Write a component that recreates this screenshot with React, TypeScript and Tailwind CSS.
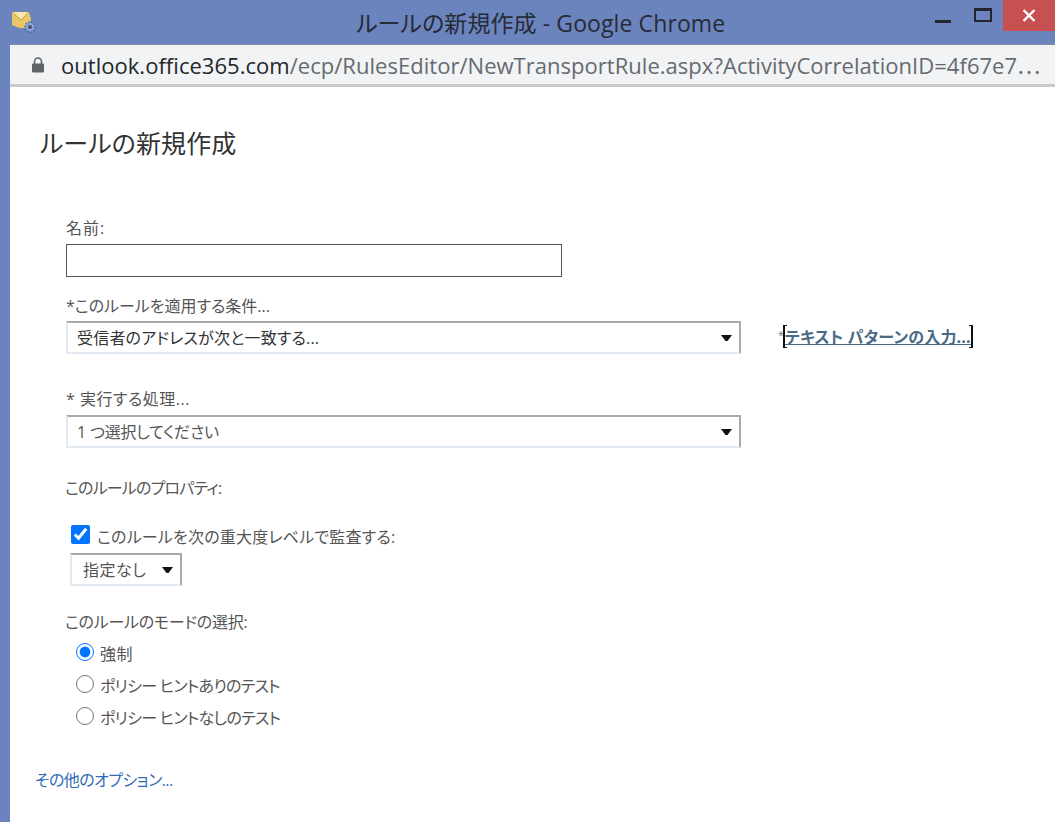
const jp = "font-['Segoe_UI','Open_Sans','Noto_Sans_CJK_JP',sans-serif] [font-feature-settings:'palt']";

function Caret({ className = "" }: { className?: string }) {
  return (
    <svg width="11" height="6" viewBox="0 0 11 6" className={className}>
      <path d="M0 0H11L6.5 6H4.5Z" fill="#111" />
    </svg>
  );
}

function Select({ text, dark, track }: { text: string; dark?: boolean; track: string }) {
  return (
    <div className="flex h-[33px] w-[675px] items-center justify-between border-2 border-t-[#a9a9ad] border-r-[#a9a9ad] border-b-[#e3e9f1] border-l-[#e3e9f1] pl-[9px] pr-[4px] bg-white">
      <span className={`text-[16px] leading-[22px] ${track} ${dark ? "text-[#333]" : "text-[#555]"}`}>{text}</span>
      <Caret className="mr-[3px]" />
    </div>
  );
}

function Radio({ label, checked, track = "" }: { label: string; checked?: boolean; track?: string }) {
  return (
    <label className="flex h-[32px] items-center">
      <input
        type="radio"
        name="mode"
        defaultChecked={checked}
        className="ml-[10px] mt-[-5px] h-[18px] w-[18px] accent-[#0075ff]"
      />
      <span className={`ml-[6px] text-[16px] leading-[22px] text-[#555] ${track}`}>{label}</span>
    </label>
  );
}

export default function App() {
  return (
    <div className={`${jp} flex h-[822px] w-[1055px] flex-col overflow-hidden bg-[#6b84bd]`}>
      <div className="flex h-[44px] shrink-0 items-start">
        <svg width="26" height="24" viewBox="0 0 26 24" className="ml-[11px] mt-[10px] shrink-0">
          <path d="M1 2H18L20 9L18 18H8L1 15Z" fill="#e9c667" />
          <path d="M1 2L10 10L18 2" fill="#f7e7a6" stroke="#c39a38" strokeWidth="1" />
          <circle cx="19" cy="17" r="5" fill="#8ea4d6" stroke="#3d5fa8" strokeWidth="1.5" strokeDasharray="1.5 1.5" />
          <circle cx="19" cy="17" r="2" fill="#47526e" />
        </svg>
        <div className="ml-[319px] mt-[8px] w-[369px] shrink-0 whitespace-nowrap text-[23px] leading-[30px] tracking-[0.1px] text-[#262b36]">
          ルールの新規作成 - Google Chrome
        </div>
        <div className="ml-[210px] mt-[20px] h-[3px] w-[16px] shrink-0 bg-[#23262e]" />
        <div className="ml-[23px] mt-[8px] h-[14px] w-[18px] shrink-0 border-2 border-t-[3px] border-[#23262e]" />
        <div className="ml-[11px] flex h-[31px] w-[52px] shrink-0 items-center justify-center bg-[#c75050]">
          <svg width="14" height="13" viewBox="0 0 14 13">
            <path d="M1.5 1L12.5 12M12.5 1L1.5 12" stroke="#fff" strokeWidth="2.4" />
          </svg>
        </div>
      </div>
      <div className="ml-[10px] flex min-h-0 flex-1 flex-col bg-white">
        <div className="flex h-[43px] shrink-0 items-center border-b-[3px] border-t border-b-[#c9c9c9] border-t-[#7e8ca8] bg-[#f1f3f4]">
          <svg width="14" height="16" viewBox="0 0 14 16" className="ml-[21px] shrink-0">
            <path d="M3.5 7V4.5a3.5 3.5 0 0 1 7 0V7" fill="none" stroke="#5f6368" strokeWidth="1.6" />
            <rect x="1" y="6.5" width="12" height="9" rx="1.2" fill="#5f6368" />
          </svg>
          <div className="ml-[16px] whitespace-nowrap text-[22px] leading-[30px] tracking-[0.03px] text-[#666a70]">
            <span className="text-[#23272c]">outlook.office365.com</span>/ecp/RulesEditor/NewTransportRule.aspx?ActivityCorrelationID=4f67e7⋯
          </div>
        </div>
        <div className="flex min-h-0 flex-1 flex-col">
          <h1 className="ml-[30px] mt-[40px] text-[25px] font-normal leading-[32px] tracking-[0.1px] text-[#333]">ルールの新規作成</h1>
          <div className="ml-[56px] mt-[58px] flex flex-col items-start">
            <div className="text-[16px] leading-[22px] tracking-[1px] text-[#555]">名前:</div>
            <div className="mt-[5px] h-[33px] w-[496px] border border-[#555] bg-white" />
            <div className="mt-[18px] text-[16px] leading-[22px] text-[#555]">*このルールを適用する条件...</div>
            <div className="mt-[4px] flex items-start">
              <Select text="受信者のアドレスが次と一致する..." dark track="tracking-[0.2px]" />
              <div className="ml-[37px] mt-[4px] flex items-center">
                <span className="mt-[-3px] text-[11px] leading-[14px] text-[#777]">*</span>
                <a className="relative -ml-[1px] flex h-[23px] items-center border-x-2 border-[#111] text-[16px] font-bold leading-[20px] tracking-[0.2px] text-[#4a6b85] underline">
                  <span className="absolute -left-[2px] top-0 h-[1px] w-[4px] bg-[#111]" />
                  <span className="absolute -left-[2px] bottom-0 h-[1px] w-[4px] bg-[#111]" />
                  テキスト パターンの入力...
                  <span className="absolute -right-[2px] top-0 h-[1px] w-[4px] bg-[#111]" />
                  <span className="absolute -right-[2px] bottom-0 h-[1px] w-[4px] bg-[#111]" />
                </a>
              </div>
            </div>
            <div className="mt-[34px] text-[16px] leading-[22px] tracking-[0.5px] text-[#555]">* 実行する処理...</div>
            <div className="mt-[5px]"><Select text="1 つ選択してください" track="tracking-[-0.2px]" /></div>
            <div className="-ml-[1px] mt-[29px] text-[16px] leading-[22px] tracking-[-0.8px] text-[#555]">このルールのプロパティ:</div>
            <label className="mt-[27px] flex h-[22px] items-center">
              <input type="checkbox" defaultChecked className="ml-[5px] mt-[-6px] h-[19px] w-[19px] accent-[#0075ff]" />
              <span className="ml-[7px] text-[16px] leading-[22px] tracking-[0.2px] text-[#555]">このルールを次の重大度レベルで監査する:</span>
            </label>
            <div className="ml-[4px] mt-[5px] flex h-[33px] w-[112px] items-center justify-between border-2 border-t-[#a9a9ad] border-r-[#a9a9ad] border-b-[#e3e9f1] border-l-[#e3e9f1] pl-[11px] pr-[5px]">
              <span className="text-[16px] leading-[22px] tracking-[0.5px] text-[#555]">指定なし</span>
              <Caret className="mr-[2px]" />
            </div>
            <div className="-ml-[1px] mt-[25px] text-[16px] leading-[22px] tracking-[-0.25px] text-[#555]">このルールのモードの選択:</div>
            <div className="mt-[5px] flex flex-col">
              <Radio label="強制" checked track="tracking-[0.5px]" />
              <Radio label="ポリシー ヒントありのテスト" track="tracking-[-0.7px]" />
              <Radio label="ポリシー ヒントなしのテスト" track="tracking-[-0.7px]" />
            </div>
          </div>
          <a className="ml-[25px] mt-[35px] text-[16px] leading-[22px] tracking-[-0.55px] text-[#2f6db5]">その他のオプション...</a>
        </div>
      </div>
    </div>
  );
}
